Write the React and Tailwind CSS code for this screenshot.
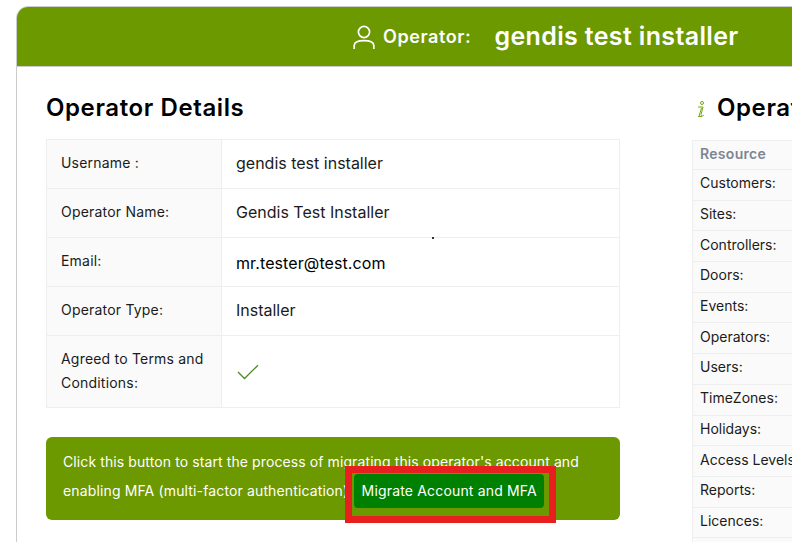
import React from 'react';

const details = [
  { label: 'Username :', value: 'gendis test installer' },
  { label: 'Operator Name:', value: 'Gendis Test Installer' },
  { label: 'Email:', value: 'mr.tester@test.com', dark: true },
  { label: 'Operator Type:', value: 'Installer' },
];

const resources = [
  'Customers:', 'Sites:', 'Controllers:', 'Doors:', 'Events:', 'Operators:',
  'Users:', 'TimeZones:', 'Holidays:', 'Access Levels:', 'Reports:', 'Licences:', '',
];

const UserIcon = () => (
  <svg width="22" height="24" viewBox="0 0 22 24" fill="none" stroke="white" strokeWidth="1.7">
    <circle cx="11" cy="7" r="5.6" />
    <path d="M1.2 24v-3.4c0-3 3.6-5 9.8-5s9.8 2 9.8 5V24" />
  </svg>
);

const App = () => {
  return (
    <div className="w-[792px] h-[542px] overflow-hidden bg-white pt-[6px] pl-4 font-['Inter',sans-serif] text-[#1b1b1b]">
      <div className="w-[900px] h-[600px] border border-[#ccc] rounded-tl-xl overflow-hidden">
        {/* Header */}
        <div className="h-[60px] bg-[#6c9800] border-b border-[#ccc] flex items-center pl-[336px] text-white">
          <UserIcon />
          <span className="ml-[8px] text-[18px] font-semibold tracking-[0.6px]">Operator:</span>
          <span className="ml-[23px] text-[25px] font-semibold tracking-[0.35px]">gendis test installer</span>
        </div>

        <div className="flex pt-[26px] pl-[29px]">
          {/* Details */}
          <div className="w-[574px] shrink-0">
            <h2 className="h-[46px] text-[24px] font-semibold text-black leading-[30px] tracking-[0.6px]">Operator Details</h2>
            <div className="relative border border-[#eee] border-b-0">
              {details.map((row) => (
                <div key={row.label} className="flex h-[49px] border-b border-[#eee]">
                  <div className="w-[175px] shrink-0 bg-[#fafafa] border-r border-[#eee] pl-[14px] pb-[4px] flex items-center text-[14px] tracking-[0.2px]">
                    {row.label}
                  </div>
                  <div className={`pl-[14px] flex items-center text-[16px] ${row.dark ? 'text-black pt-[2px] tracking-[0.1px]' : 'pb-[2px]'}`}>
                    {row.value}
                  </div>
                </div>
              ))}
              <div className="flex h-[72px] border-b border-[#eee]">
                <div className="w-[175px] shrink-0 bg-[#fafafa] border-r border-[#eee] pl-[14px] pb-[2px] flex items-center text-[14px] leading-6 tracking-[0.2px]">
                  Agreed to Terms and<br />Conditions:
                </div>
                <div className="pl-[15px] flex items-center">
                  <svg width="22" height="16" viewBox="0 0 22 16" fill="none" stroke="#4d8a1f" strokeWidth="1.3">
                    <path d="M1 8l6.5 6.5L21 1.2" />
                  </svg>
                </div>
              </div>
              {/* stray mark left on the row line in the screenshot */}
              <div className="absolute left-[385px] top-[97px] w-[2px] h-[2px] bg-[#333]" />
            </div>

            {/* Migrate banner */}
            <div className="relative mt-[29px] h-[83px] bg-[#6c9800] rounded-md px-[17px] pt-[10px] text-white text-[14px]">
              <p className="leading-[29px] whitespace-nowrap tracking-[0.1px]">
                Click this button to start the process of migrating this operator's account and
              </p>
              <div className="flex items-center h-[29px] whitespace-nowrap">
                <span className="tracking-[0.14px]">enabling MFA (multi-factor authentication)</span>
                <button className="ml-[6px] h-[34px] w-[190px] bg-[#008000] rounded text-white text-[14px] tracking-[0.17px]">
                  Migrate Account and MFA
                </button>
              </div>
              <div className="absolute left-[299px] top-[29px] w-[211px] h-[57px] border-[7px] border-[#e81f1f]" />
            </div>
          </div>

          {/* Resource table */}
          <div className="ml-[72px] w-[300px]">
            <div className="h-[47px] flex items-start">
              <svg className="ml-[4px] mt-[8px]" width="10" height="17" viewBox="0 0 10 17" fill="none" stroke="#7aa51d" strokeWidth="1">
                <circle cx="6" cy="2" r="1.5" />
                <path d="M2 6h5L5 13.5c-.3 1.5 1.5 2 3 .5M3 15.5L5.5 7M2 15.5h4" />
              </svg>
              <h2 className="ml-[11px] text-[24px] font-semibold text-black leading-[30px] tracking-[0.6px] whitespace-nowrap">Operator Statistics</h2>
            </div>
            <div className="border-l border-t border-[#eee] bg-[#fafafa]">
              <div className="h-[29px] pl-[7px] pb-[3px] flex items-center border-b border-[#eee] text-[14px] font-semibold tracking-[0.3px] text-[#7c8594]">
                Resource
              </div>
              {resources.map((name, i) => (
                <div key={i} className="h-[30.7px] pl-[7px] pb-[4px] flex items-center border-b border-[#eee] text-[14px]">
                  {name}
                </div>
              ))}
            </div>
          </div>
        </div>
      </div>
    </div>
  );
};

export default App;
